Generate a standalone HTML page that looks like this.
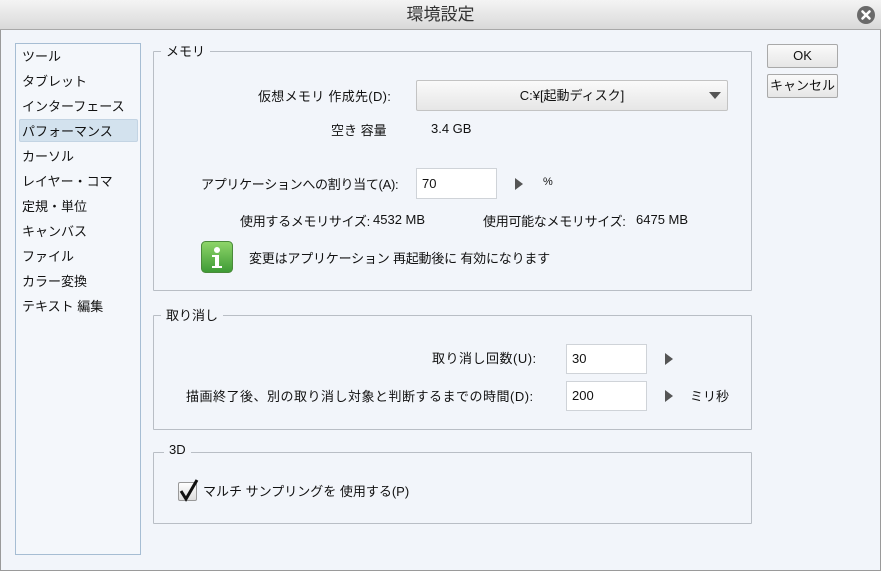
<!DOCTYPE html>
<html><head><meta charset="utf-8"><style>
*{margin:0;padding:0;box-sizing:border-box}
body{width:881px;height:571px;overflow:hidden;background:#f2f5fa;font-family:"Liberation Sans","Noto Sans CJK JP",sans-serif;font-size:13px;color:#111;position:relative}
.a{position:absolute;white-space:nowrap}
.frame{left:0;top:0;width:881px;height:571px;border:1px solid #9a9a9a}
.title{left:0;top:0;width:881px;height:30px;background:linear-gradient(#f4f4f4,#d9d9d9);border-bottom:1px solid #a8a8a8;text-align:center;font-size:17px;line-height:30px;color:#333}
.list{left:15px;top:43px;width:126px;height:512px;border:1px solid #a6bdd3;background:#f4f7fb}
.item{left:22px;font-size:13px}
.sel{left:19px;top:119px;width:119px;height:23px;background:#d3e2ee;border:1px solid #c3d4e3;border-radius:2px}
.grp{border:1px solid #b9bec5;border-radius:1px}
.gl{background:#f2f5fa;padding:0 5px;font-size:13px}
.btn{border:1px solid #a9a9a9;border-radius:2px;background:linear-gradient(#fafafa,#e6e6e6);text-align:center}
.inp{background:#fff;border:1px solid #cfd3d8;padding-left:5px;font-size:13px}
.tri{width:0;height:0;border-top:6px solid transparent;border-bottom:6px solid transparent;border-left:8px solid #555}
</style></head><body>
<div class="a frame"></div>
<div class="a title">環境設定</div>
<svg class="a" style="left:856px;top:5px" width="20" height="20"><circle cx="10" cy="10" r="9" fill="#6a6a6a"/><path d="M6.5 6.5L13.5 13.5M13.5 6.5L6.5 13.5" stroke="#fff" stroke-width="2.6" stroke-linecap="round"/></svg>

<div class="a list"></div>
<div class="a sel"></div>
<div class="a item" style="top:46px">ツール</div>
<div class="a item" style="top:71px">タブレット</div>
<div class="a item" style="top:96px">インターフェース</div>
<div class="a item" style="top:121px">パフォーマンス</div>
<div class="a item" style="top:146px">カーソル</div>
<div class="a item" style="top:171px">レイヤー・コマ</div>
<div class="a item" style="top:196px">定規・単位</div>
<div class="a item" style="top:221px">キャンバス</div>
<div class="a item" style="top:246px">ファイル</div>
<div class="a item" style="top:271px">カラー変換</div>
<div class="a item" style="top:296px">テキスト 編集</div>

<div class="a btn" style="left:767px;top:44px;width:71px;height:24px;line-height:22px">OK</div>
<div class="a btn" style="left:767px;top:74px;width:71px;height:24px;line-height:22px">キャンセル</div>

<!-- メモリ -->
<div class="a grp" style="left:153px;top:51px;width:599px;height:240px"></div>
<div class="a gl" style="left:161px;top:41px">メモリ</div>
<div class="a" style="left:258px;top:86px;letter-spacing:0.3px">仮想メモリ 作成先(D):</div>
<div class="a btn" style="left:416px;top:80px;width:312px;height:31px;line-height:29px;border-color:#c3c3c3">C:¥[起動ディスク]</div>
<div class="a" style="left:709px;top:92px;width:0;height:0;border-left:6px solid transparent;border-right:6px solid transparent;border-top:7px solid #555"></div>
<div class="a" style="left:331px;top:120px">空き 容量</div>
<div class="a" style="left:431px;top:121px">3.4 GB</div>
<div class="a" style="left:201px;top:174px;letter-spacing:-0.3px">アプリケーションへの割り当て(A):</div>
<div class="a inp" style="left:416px;top:168px;width:81px;height:31px;line-height:29px">70</div>
<div class="a tri" style="left:515px;top:178px"></div>
<div class="a" style="left:543px;top:176px;font-size:11px">%</div>
<div class="a" style="left:240px;top:211px;letter-spacing:-0.3px">使用するメモリサイズ:</div>
<div class="a" style="left:373px;top:212px">4532 MB</div>
<div class="a" style="left:483px;top:211px;letter-spacing:-0.3px">使用可能なメモリサイズ:</div>
<div class="a" style="left:636px;top:212px">6475 MB</div>
<svg class="a" style="left:201px;top:241px" width="32" height="32"><defs><linearGradient id="g" x1="0" y1="0" x2="0" y2="1"><stop offset="0" stop-color="#8fd66a"/><stop offset="1" stop-color="#3d9a35"/></linearGradient></defs><rect x="0.5" y="0.5" width="31" height="31" rx="4" fill="url(#g)" stroke="#4a8a3a"/><circle cx="16" cy="9" r="3" fill="#fff"/><path d="M11 14h7v11h3v2h-10v-2h3v-9h-3z" fill="#fff"/></svg>
<div class="a" style="left:249px;top:248px;letter-spacing:-0.2px">変更はアプリケーション 再起動後に 有効になります</div>

<!-- 取り消し -->
<div class="a grp" style="left:153px;top:315px;width:599px;height:115px"></div>
<div class="a gl" style="left:161px;top:305px">取り消し</div>
<div class="a" style="left:432px;top:348px;letter-spacing:0.5px">取り消し回数(U):</div>
<div class="a inp" style="left:566px;top:344px;width:81px;height:30px;line-height:28px">30</div>
<div class="a tri" style="left:665px;top:353px"></div>
<div class="a" style="left:186px;top:386px;letter-spacing:0.5px">描画終了後、別の取り消し対象と判断するまでの時間(D):</div>
<div class="a inp" style="left:566px;top:381px;width:81px;height:30px;line-height:28px">200</div>
<div class="a tri" style="left:665px;top:390px"></div>
<div class="a" style="left:690px;top:386px">ミリ秒</div>

<!-- 3D -->
<div class="a grp" style="left:153px;top:452px;width:599px;height:72px"></div>
<div class="a gl" style="left:164px;top:442px">3D</div>
<div class="a" style="left:178px;top:482px;width:19px;height:19px;border:1px solid #999;border-radius:2px;background:linear-gradient(#fff,#ddd)"></div>
<svg class="a" style="left:178px;top:478px" width="22" height="24"><path d="M3 13l5 8 11-19" stroke="#111" stroke-width="3" fill="none"/></svg>
<div class="a" style="left:203px;top:481px">マルチ サンプリングを 使用する(P)</div>
</body></html>
